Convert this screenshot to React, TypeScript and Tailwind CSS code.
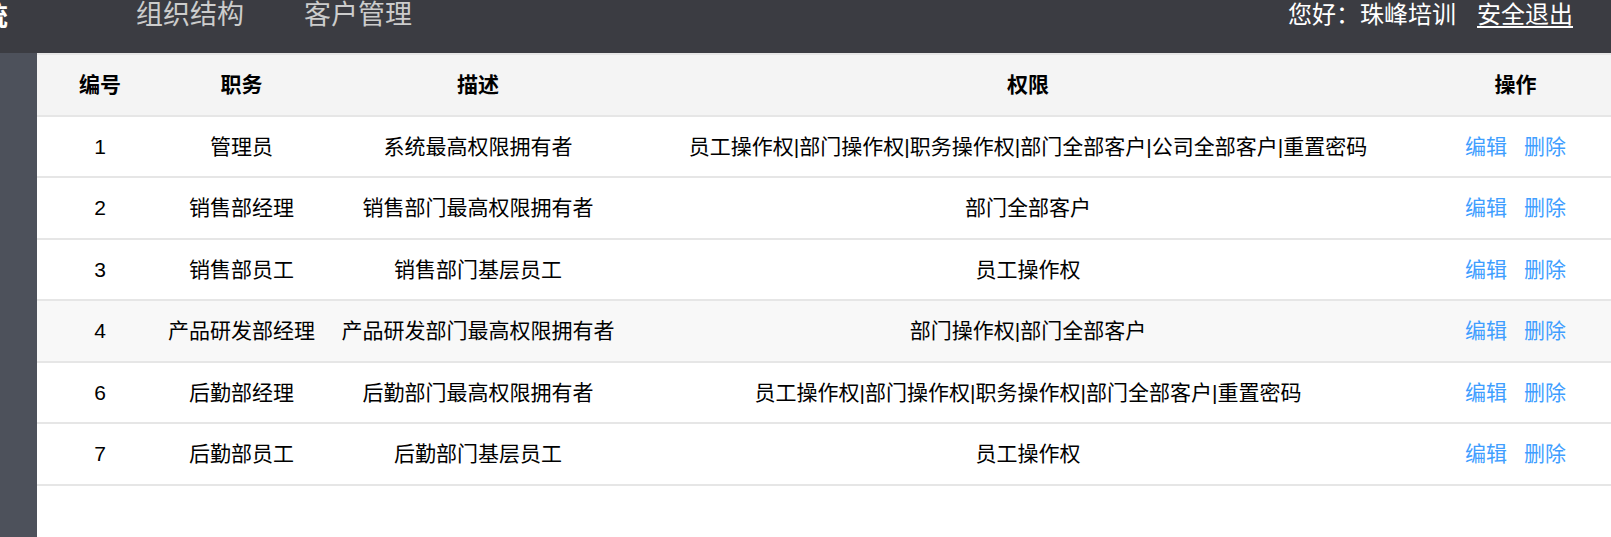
import React from "react";

type Row = { id: string; role: string; desc: string; perm: string; hl?: boolean };

const rows: Row[] = [
  { id: "1", role: "管理员", desc: "系统最高权限拥有者", perm: "员工操作权|部门操作权|职务操作权|部门全部客户|公司全部客户|重置密码" },
  { id: "2", role: "销售部经理", desc: "销售部门最高权限拥有者", perm: "部门全部客户" },
  { id: "3", role: "销售部员工", desc: "销售部门基层员工", perm: "员工操作权" },
  { id: "4", role: "产品研发部经理", desc: "产品研发部门最高权限拥有者", perm: "部门操作权|部门全部客户", hl: true },
  { id: "6", role: "后勤部经理", desc: "后勤部门最高权限拥有者", perm: "员工操作权|部门操作权|职务操作权|部门全部客户|重置密码" },
  { id: "7", role: "后勤部员工", desc: "后勤部门基层员工", perm: "员工操作权" },
];

const grid = "grid grid-cols-[126px_157px_316px_784px_1fr] items-center text-center";

export default function App() {
  return (
    <div className="h-screen flex flex-col bg-white [font-family:'Liberation_Sans','Noto_Sans_CJK_SC',sans-serif]">
      <header className="h-[53px] shrink-0 bg-[#3b3c42] flex items-start">
        <div className="w-[8px] overflow-hidden flex justify-end">
          <span className="whitespace-nowrap text-white font-bold text-[27px] leading-[35px]">管理系统</span>
        </div>
        <nav className="ml-[128px] flex gap-[60px] text-[#cccccc] text-[27px] leading-[31px]">
          <span>组织结构</span>
          <span>客户管理</span>
        </nav>
        <div className="ml-auto mr-[38px] flex gap-[21px] text-white text-[24px] leading-[29px]">
          <span>您好：珠峰培训</span>
          <span className="underline underline-offset-[3px]">安全退出</span>
        </div>
      </header>
      <div className="flex-1 flex">
        <aside className="w-[37px] shrink-0 bg-[#4d515b]" />
        <main className="flex-1">
          <div className={`${grid} h-[63.5px] bg-[#f4f4f4] border-t-2 border-b-2 border-[#e6e6e6] font-bold text-[21px] text-black`}>
            <div>编号</div>
            <div>职务</div>
            <div>描述</div>
            <div>权限</div>
            <div>操作</div>
          </div>
          {rows.map((r) => (
            <div
              key={r.id}
              className={`${grid} h-[61.5px] border-b-2 border-[#e6e6e6] text-[21px] text-black ${r.hl ? "bg-[#f8f8f8]" : "bg-white"}`}
            >
              <div>{r.id}</div>
              <div className="whitespace-nowrap">{r.role}</div>
              <div className="whitespace-nowrap">{r.desc}</div>
              <div className="whitespace-nowrap">{r.perm}</div>
              <div className="flex justify-center gap-[17px] text-[#409eff]">
                <span>编辑</span>
                <span>删除</span>
              </div>
            </div>
          ))}
        </main>
      </div>
    </div>
  );
}
